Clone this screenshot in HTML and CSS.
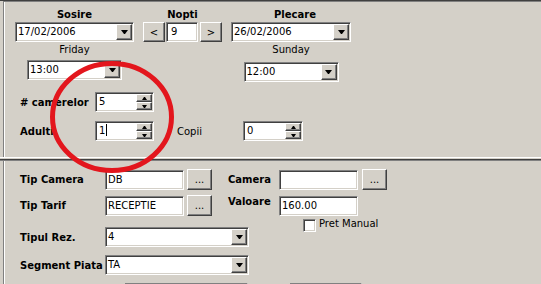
FILE: index.html
```html
<!DOCTYPE html>
<html>
<head>
    <meta charset="UTF-8">
    <title>Rezervare</title>
    <link rel="stylesheet" href="styles.css">
</head>
<body>
    <div class="window">
        <!-- sejur: sosire / nopti / plecare -->
        <div class="panel panel-top">
            <div class="stay">
                <div class="group group-in">
                    <div class="cap">Sosire</div>
                    <div class="combo sunk date"><span class="val">17/02/2006</span><span class="drop raised"></span></div>
                    <div class="day">Friday</div>
                    <div class="combo sunk time"><span class="val">13:00</span><span class="drop raised"></span></div>
                </div>
                <div class="group group-nights">
                    <div class="cap">Nopti</div>
                    <div class="stepper">
                        <button class="btn raised step">&lt;</button>
                        <div class="field sunk nights">9</div>
                        <button class="btn raised step step-next">&gt;</button>
                    </div>
                </div>
                <div class="group group-out">
                    <div class="cap cap-out">Plecare</div>
                    <div class="combo sunk date"><span class="val">26/02/2006</span><span class="drop raised"></span></div>
                    <div class="day">Sunday</div>
                    <div class="combo sunk time time-out"><span class="val">12:00</span><span class="drop raised"></span></div>
                </div>
            </div>

            <div class="guests">
                <div class="guest-row">
                    <span class="lbl guest-lbl"># camerelor</span>
                    <div class="spin sunk"><span class="val">5</span><span class="spin-btns"><span class="raised up"></span><span class="raised down"></span></span></div>
                </div>
                <div class="guest-row guest-row-2">
                    <span class="lbl guest-lbl">Adulti</span>
                    <div class="spin sunk"><span class="val">1<i class="caret"></i></span><span class="spin-btns"><span class="raised up"></span><span class="raised down"></span></span></div>
                    <span class="copii">Copii</span>
                    <div class="spin sunk spin-kids"><span class="val">0</span><span class="spin-btns"><span class="raised up"></span><span class="raised down"></span></span></div>
                </div>
            </div>
        </div>

        <div class="divider"></div>

        <!-- camera si tarif -->
        <div class="panel panel-bottom">
            <div class="cols">
                <div class="col col-left">
                    <div class="row">
                        <span class="lbl left-lbl">Tip Camera</span>
                        <div class="field sunk text">DB</div>
                        <button class="btn raised more">...</button>
                    </div>
                    <div class="row row-b">
                        <span class="lbl left-lbl">Tip Tarif</span>
                        <div class="field sunk text">RECEPTIE</div>
                        <button class="btn raised more">...</button>
                    </div>
                    <div class="row row-d">
                        <span class="lbl left-lbl">Tipul Rez.</span>
                        <div class="combo sunk wide"><span class="val">4</span><span class="drop raised"></span></div>
                    </div>
                    <div class="row row-e">
                        <span class="lbl left-lbl">Segment Piata</span>
                        <div class="combo sunk wide"><span class="val">TA</span><span class="drop raised"></span></div>
                    </div>
                </div>
                <div class="col col-right">
                    <div class="row">
                        <span class="lbl right-lbl">Camera</span>
                        <div class="field sunk text"></div>
                        <button class="btn raised more more-right">...</button>
                    </div>
                    <div class="row row-b">
                        <span class="lbl right-lbl lbl-top">Valoare</span>
                        <div class="field sunk text">160.00</div>
                    </div>
                    <div class="row row-check">
                        <span class="check sunk"></span>
                        <span class="check-text">Pret Manual</span>
                    </div>
                </div>
            </div>
            <div class="row row-cut">
                <div class="field sunk cut-a"></div>
                <div class="field sunk cut-b"></div>
            </div>
        </div>

        <svg class="mark" width="541" height="284" viewBox="0 0 541 284">
            <ellipse cx="112" cy="117" rx="59.5" ry="53.5" fill="none" stroke="#e3161d" stroke-width="5"/>
        </svg>
    </div>
</body>
</html>
```

FILE: styles.css
```css
/* fereastra clasica, fundal gri */
* {
    box-sizing: border-box;
}

body {
    margin: 0;
    background: #d4d0c8;
    font-family: "DejaVu Sans", sans-serif;
    font-size: 10px;
    color: #000;
}

.window {
    position: relative;
    width: 541px;
    height: 284px;
    overflow: hidden;
    border-top: 1px solid #404040;
    padding-left: 3px;
}

/* bevel-uri */
.sunk {
    background: #fff;
    border: 1px solid;
    border-color: #808080 #fff #fff #808080;
    box-shadow: inset 1px 1px 0 #404040, inset -1px -1px 0 #d4d0c8;
}

.raised {
    background: #d4d0c8;
    border: 1px solid;
    border-color: #fff #404040 #404040 #fff;
    box-shadow: inset -1px -1px 0 #808080, inset 1px 1px 0 #d4d0c8;
}

/* panouri */
.panel {
    border-left: 1px solid #808080;
    box-shadow: inset 1px 0 0 #fff;
}

.panel-top {
    height: 156px;
    border-top: 1px solid #808080;
    padding-top: 7px;
}

.divider {
    height: 4px;
    margin-left: -3px;
    border-top: 1px solid #fff;
    border-bottom: 1px solid #808080;
    box-shadow: inset 0 -1px 0 #404040;
}

.panel-bottom {
    height: 123px;
    padding-top: 8px;
}

/* sejur */
.stay {
    display: flex;
    align-items: flex-start;
    padding-left: 11px;
}

.group {
    display: flex;
    flex-direction: column;
    align-items: center;
}

.group-in {
    width: 119px;
}

.group-nights {
    margin-left: 9px;
}

.group-out {
    width: 120px;
    margin-left: 9px;
}

.cap {
    font-weight: bold;
    line-height: 12px;
    height: 12px;
}

.cap-out {
    padding-left: 8px;
}

.day {
    line-height: 12px;
    margin-top: 2px;
}

.combo {
    display: flex;
    align-items: center;
    height: 20px;
    padding: 1px;
}

.date {
    width: 100%;
    margin-top: 1px;
}

.time {
    width: 95px;
    margin-top: 4px;
}

.time-out {
    margin-top: 6px;
}

.val {
    flex: 1;
    padding-left: 1px;
    line-height: 16px;
    white-space: nowrap;
}

.drop {
    width: 16px;
    height: 16px;
    display: flex;
    align-items: center;
    justify-content: center;
}

.drop::after {
    content: "";
    width: 1px;
    border-style: solid;
    border-width: 4px 3px 0;
    border-color: #000 transparent transparent;
}

.btn {
    font-family: inherit;
    font-size: 10px;
    color: #000;
    padding: 0;
    margin: 0;
    height: 20px;
}

.stepper {
    display: flex;
    margin-top: 1px;
}

.step {
    width: 22px;
}

.step-next {
    margin-left: 2px;
}

.field {
    height: 20px;
    line-height: 18px;
    padding-left: 2px;
    white-space: nowrap;
}

.nights {
    width: 32px;
    margin-left: 1px;
    padding-left: 4px;
}

/* numar camere si persoane */
.guests {
    margin-top: 10px;
    padding-left: 16px;
}

.guest-row {
    display: flex;
    align-items: center;
}

.guest-row-2 {
    margin-top: 9px;
}

.lbl {
    font-weight: bold;
}

.guest-lbl {
    width: 75px;
}

.spin {
    display: flex;
    align-items: center;
    width: 59px;
    height: 20px;
    padding: 1px;
}

.spin .val {
    padding-left: 2px;
}

.spin-kids {
    width: 60px;
}

.caret {
    display: inline-block;
    width: 1px;
    height: 12px;
    background: #000;
    vertical-align: -2px;
    margin-left: 1px;
}

.spin-btns {
    display: flex;
    flex-direction: column;
    width: 16px;
}

.spin-btns span {
    height: 8px;
    display: flex;
    align-items: center;
    justify-content: center;
}

.up::after {
    content: "";
    width: 1px;
    border-style: solid;
    border-width: 0 2px 3px;
    border-color: transparent transparent #000;
}

.down::after {
    content: "";
    width: 1px;
    border-style: solid;
    border-width: 3px 2px 0;
    border-color: #000 transparent transparent;
}

.copii {
    margin-left: 23px;
    width: 66px;
}

/* partea de jos */
.cols {
    display: flex;
    align-items: flex-start;
}

/* combo-urile lungi ies din coloana, sub coloana din dreapta */
.col-left {
    flex: none;
    width: 208px;
    padding-left: 16px;
}

.col-right {
    margin-left: 16px;
}

.row {
    display: flex;
    align-items: center;
    height: 21px;
}

.row-b {
    margin-top: 5px;
}

.row-d {
    margin-top: 11px;
    height: 20px;
}

.row-e {
    margin-top: 8px;
    height: 20px;
}

.left-lbl {
    flex: none;
    width: 85px;
    white-space: nowrap;
}

.right-lbl {
    width: 51px;
}

.lbl-top {
    align-self: flex-start;
    line-height: 12px;
    margin-top: 1px;
}

.text {
    width: 79px;
}

.more {
    width: 25px;
    height: 21px;
    margin-left: 3px;
    line-height: 16px;
}

.more-right {
    margin-left: 4px;
}

.wide {
    flex: none;
    width: 144px;
}

.row-check {
    margin-top: 3px;
    height: 13px;
    align-items: flex-start;
}

.check {
    width: 13px;
    height: 13px;
    margin-left: 75px;
}

.check-text {
    margin-left: 3px;
    line-height: 12px;
    margin-top: -1px;
}

.row-cut {
    margin-top: 7px;
    padding-left: 16px;
}

.cut-a {
    width: 123px;
    margin-left: 105px;
}

.cut-b {
    width: 72px;
    margin-left: 42px;
}

/* cercul rosu desenat peste formular */
.mark {
    position: absolute;
    left: 0;
    top: -1px;
    pointer-events: none;
}
```
